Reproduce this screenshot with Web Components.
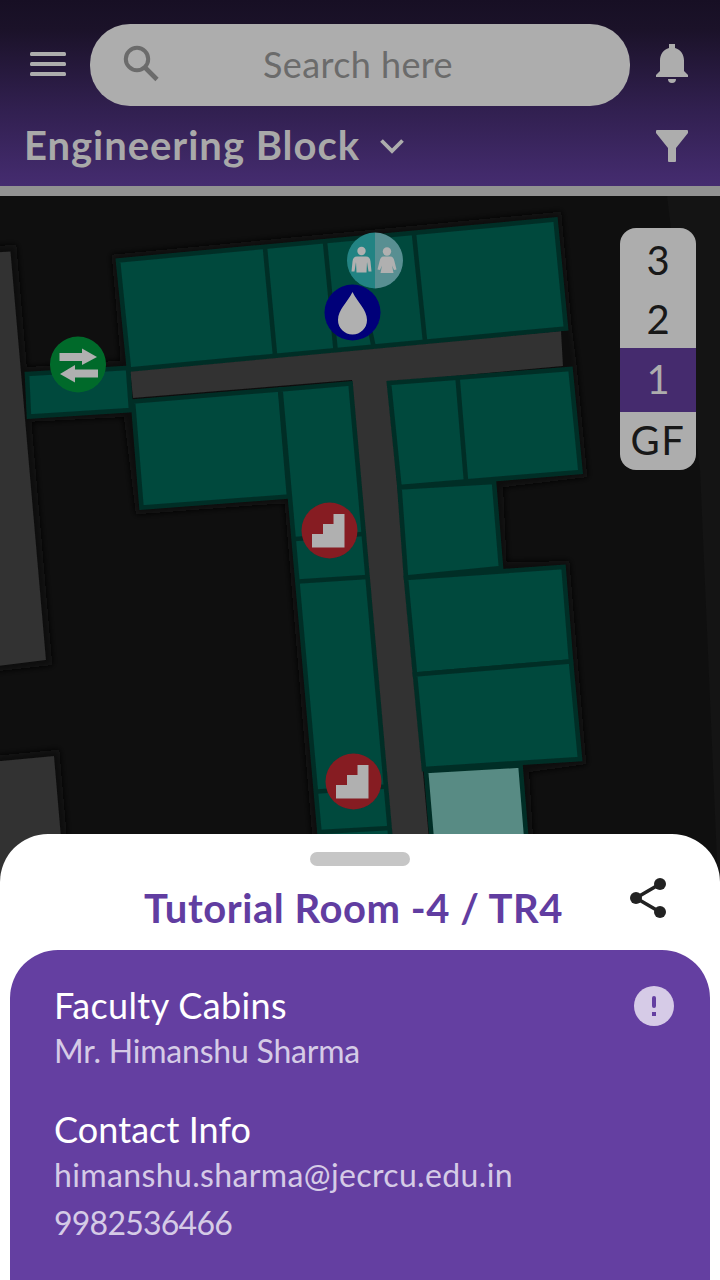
<!DOCTYPE html>
<html lang="en"><head><meta charset="utf-8"><title>Campus map</title>
<style>body{margin:0;width:720px;height:1280px;overflow:hidden;background:#0f0f0f;font-family:Lato,"Open Sans",sans-serif}</style></head>
<body><campus-app></campus-app>
<script>
const define=(name,html,init)=>customElements.define(name,class extends HTMLElement{
  connectedCallback(){ if(this.shadowRoot)return; this.attachShadow({mode:'open'}).innerHTML=html; if(init)init(this); }
});

/* One line of text whose tracking is adjusted to a given measure. */
define('tracked-text',`<style>:host{display:block;white-space:nowrap}span{display:inline-block}</style><span><slot></slot></span>`,el=>{
  const s=el.shadowRoot.querySelector('span'), w=+el.getAttribute('measure'), n=el.textContent.length;
  s.style.letterSpacing=((w-s.getBoundingClientRect().width)/n).toFixed(3)+'px';
});

define('app-header',`<style>
:host{display:flex;flex-direction:column;box-sizing:border-box;height:196px;border-bottom:10px solid #929292;padding-top:24px;background:linear-gradient(#170f24 0,#1b1229 30px,#301f4e 105px,#452c70 186px);color:#adadad}
.row{display:flex;align-items:center}
.top{height:82px;padding:0 28px 0 30px;gap:24px}
.search{flex:1;display:flex;align-items:center;height:82px;border-radius:40px;background:#adadad;color:#6b6b6b;font-size:36px}
.search svg{margin-left:30px}.search tracked-text{margin-left:99px;line-height:44px;margin-top:-3px}
.block{padding:0 28px 0 24px;height:80px}
.block tracked-text{font-size:40px;font-weight:700;line-height:48px;margin-top:-2px;color:#a9a9a9}
.chev{margin-left:20px}.filter{margin-left:auto}
svg{display:block;flex:none}
</style>
<div class="row top">
<svg width="36" height="26" fill="currentColor" style="margin-top:-2px"><rect y="1" width="36" height="4" rx="1.5"/><rect y="11" width="36" height="4" rx="1.5"/><rect y="21" width="36" height="4" rx="1.5"/></svg>
<div class="search"><svg width="44" height="44" viewBox="0 0 44 44" fill="none" stroke="currentColor" stroke-width="4"><circle cx="17" cy="16" r="11.2"/><path d="M25 24.5 37 36.500" stroke-width="4.6"/></svg><tracked-text measure="190">Search here</tracked-text></div>
<svg width="40" height="42" viewBox="0 0 40 42" fill="currentColor" style="margin-left:-2px;margin-top:-2px"><path d="M17 1h6v4c5.600 1.500 9 6.500 9 12.500V28l4 4v2H4v-2l4-4V17.500C8 11.500 11.400 6.500 17 5zM16 36h8a4 4 0 0 1-8 0z"/></svg>
</div>
<div class="row block"><tracked-text measure="336">Engineering Block</tracked-text>
<svg class="chev" width="24" height="16" viewBox="0 0 24 16" fill="none" stroke="currentColor" stroke-width="3.800"><path d="m1.500 2.500 10.500 10.500L22.500 2.500"/></svg>
<svg class="filter" width="40" height="32" viewBox="0 0 40 32" fill="currentColor"><path d="M5 0h30q1 0 1 1v2L24 18v13q0 1-1 1h-6q-1 0-1-1V18L4 3V1q0-1 1-1z"/></svg></div>`);

define('floor-picker',`<style>:host{display:flex;flex-direction:column;width:76px;height:242px;border-radius:16px;overflow:hidden;background:#adadad;color:#181818;font-size:40px;text-align:center}
span{display:block;box-sizing:border-box;height:60px;line-height:62px}.on{height:64px;line-height:63px;background:#452b6e;color:#adadad}.gf{height:58px;line-height:56px;display:flex;justify-content:center}.three{line-height:64px}</style>
<span class="three">3</span><span>2</span><span class="on">1</span><span class="gf"><tracked-text measure="55">GF</tracked-text></span>`);

define('floor-map',`<style>:host{display:block;position:relative;height:688px;background:#0f0f0f}svg{display:block}
floor-picker{position:absolute;left:620px;top:32px}</style>
<svg width="720" height="688" viewBox="0 196 720 688">
<defs><filter id="b" x="-20%" y="-20%" width="140%" height="140%"><feGaussianBlur stdDeviation="3"/></filter><filter id="s"><feGaussianBlur stdDeviation=".6"/></filter>
<g id="stairs"><circle r="28" fill="#861a20"/><path d="M-17.500 17V3.500H-6.500V-6.500H4V-16.500H15V17z" fill="#b0b0b0"/></g></defs>
<path d="M667 196h53v688h-2L700 470z" fill="#141414"/>
<g filter="url(#b)" fill="#0a0a0a" stroke="#0a0a0a" stroke-width="12"><path d="M-9 252 11 251 46 660-9 666zM-9 762 54 756 65 884H-9zM118 260 556 218 566 328 571 368 581 472 497 482 501 568 564 567 580 759 523 767 530 884H322L290 497 141 508 129 411 29 416 25 373 127 366z"/></g>
<g filter="url(#s)">
<path d="M-9 252.500 10.500 251.500 46 660-9 667zM-9 762 54 756 65 884H-9zM130 370 561 331 563 366 388 382 433 884H396L352 380 133 398z" fill="#303030"/>
<g fill="#00483e" stroke="#002f27" stroke-width="4.600">
<path d="M27 374 128 368 131 410 29 416.500z"/>
<path d="M118 260.500 555.500 219.500 566 328.500 129 369.500z"/>
<path d="M133 401.500 280 389.500 289 496.500 141.500 507.500z"/>
<path d="M280.500 389.500 350.500 383.500 394.500 884H324z"/>
<path d="M389 383 570.500 369 580.500 472 399.500 487z"/>
<path d="M399.500 487.500 494 482 501 568 406 577.500z"/>
<path d="M406 578 563.500 567 571 661.500 415 674.500z"/>
<path d="M415 674.500 571 661.500 580 759 424 769z"/>
<path d="M426 771 520.500 765.500 530 884H435.500z" fill="#588b84"/>
<path d="M265 248 275 355M325 242 335.500 349M370 330 373.500 346M414 234 425 341M457.500 377 466 481M295 539 363 534M298 581.500 367 577M317.500 791.500 387 786.500M320 832 390 828" fill="none"/></g>
<g transform="translate(78 364.500)"><circle r="28" fill="#006b2b"/><path d="M-18.500-11.500H4V-16L19-7.500 4 .500V-3.500H-18.500zM20 5H-3V.500L-18 9.500-3 18V13H20z" fill="#b0b0b0"/></g>
<g transform="translate(375 260.500)"><path d="M0-28a28 28 0 0 0 0 56z" fill="#248383"/><path d="M0-28a28 28 0 0 1 0 56z" fill="#588f92"/><g fill="#b0b0b0"><circle cx="-13.500" cy="-9.500" r="4.200"/><circle cx="12" cy="-9" r="4.200"/><path d="M-18-4h9q4 0 4.500 5l1 10H-6.500L-8 1.500-8.500 12h-10L-19 1.500-20.500 11h-3l1-10q.500-5 4.500-5zM8.500-4h7q3 0 4 5l2 8-2.500.500L17 5l1.500 7.500H5.500L7 5 5 9.500 2.500 9l2-8q1-5 4-5z"/></g></g>
<g transform="translate(352.500 312.500)"><circle r="28" fill="#000079"/><path d="M0-20.500C5-10 14.500-3 14.500 7.500a14.500 14.500 0 0 1-29 0C-14.500-3-5-10 0-20.500z" fill="#b0b0b0"/></g>
<use href="#stairs" x="329.500" y="530.500"/><use href="#stairs" x="353.500" y="781.500"/>
</g></svg><floor-picker></floor-picker>`);

define('info-group',`<style>:host{display:block;color:#d5cbe6;font-size:32px;line-height:48px}.h{color:#fff;font-size:36px;line-height:44px}</style><div class="h"><slot name="heading"></slot></div><slot></slot>`);

define('room-sheet',`<style>
:host{display:flex;flex-direction:column;position:relative;margin-top:-50px;height:446px;border-radius:48px 48px 0 0;background:#fff;overflow:hidden}
.handle{width:100px;height:14px;border-radius:7px;background:#c6c6c6;margin:18px auto 0;flex:none}
.title{display:flex;height:84px;box-sizing:border-box;padding:17px 50px 0 144px;justify-content:space-between;color:#613da1;font-size:40px;font-weight:700;line-height:50px}
.title svg{margin-top:-7px}
.card{flex:1;display:flex;justify-content:space-between;margin:0 10px;border-radius:48px 48px 0 0;background:#643fa1;padding:33px 36px 0 44px}
.card>svg{margin-top:3px}.groups{display:flex;flex-direction:column;gap:32px}
</style><div class="handle"></div>
<div class="title"><tracked-text measure="419">Tutorial Room -4 / TR4</tracked-text><svg width="44" height="44" viewBox="626 876 44 44"><path d="M660 884 636 898 660 912" fill="none" stroke="#222" stroke-width="3.600"/><g fill="#222"><circle cx="660" cy="884" r="6"/><circle cx="636" cy="898" r="6"/><circle cx="660" cy="912" r="6"/></g></svg></div>
<div class="card"><div class="groups">
<info-group><tracked-text slot="heading" measure="233">Faculty Cabins</tracked-text><tracked-text measure="306">Mr. Himanshu Sharma</tracked-text></info-group>
<info-group><tracked-text slot="heading" measure="197">Contact Info</tracked-text><tracked-text measure="459">himanshu.sharma@jecrcu.edu.in</tracked-text><tracked-text measure="178">9982536466</tracked-text></info-group>
</div><svg width="40" height="40"><circle cx="20" cy="20" r="20" fill="#d6cbe7"/><rect x="18" y="10" width="4" height="12" rx="2" fill="#643fa1"/><rect x="18" y="26" width="4" height="4" fill="#643fa1"/></svg></div>`);

define('campus-app',`<style>:host{display:flex;flex-direction:column;height:1280px}app-header,floor-map{flex:none}</style><app-header></app-header><floor-map></floor-map><room-sheet></room-sheet>`);
</script></body></html>
